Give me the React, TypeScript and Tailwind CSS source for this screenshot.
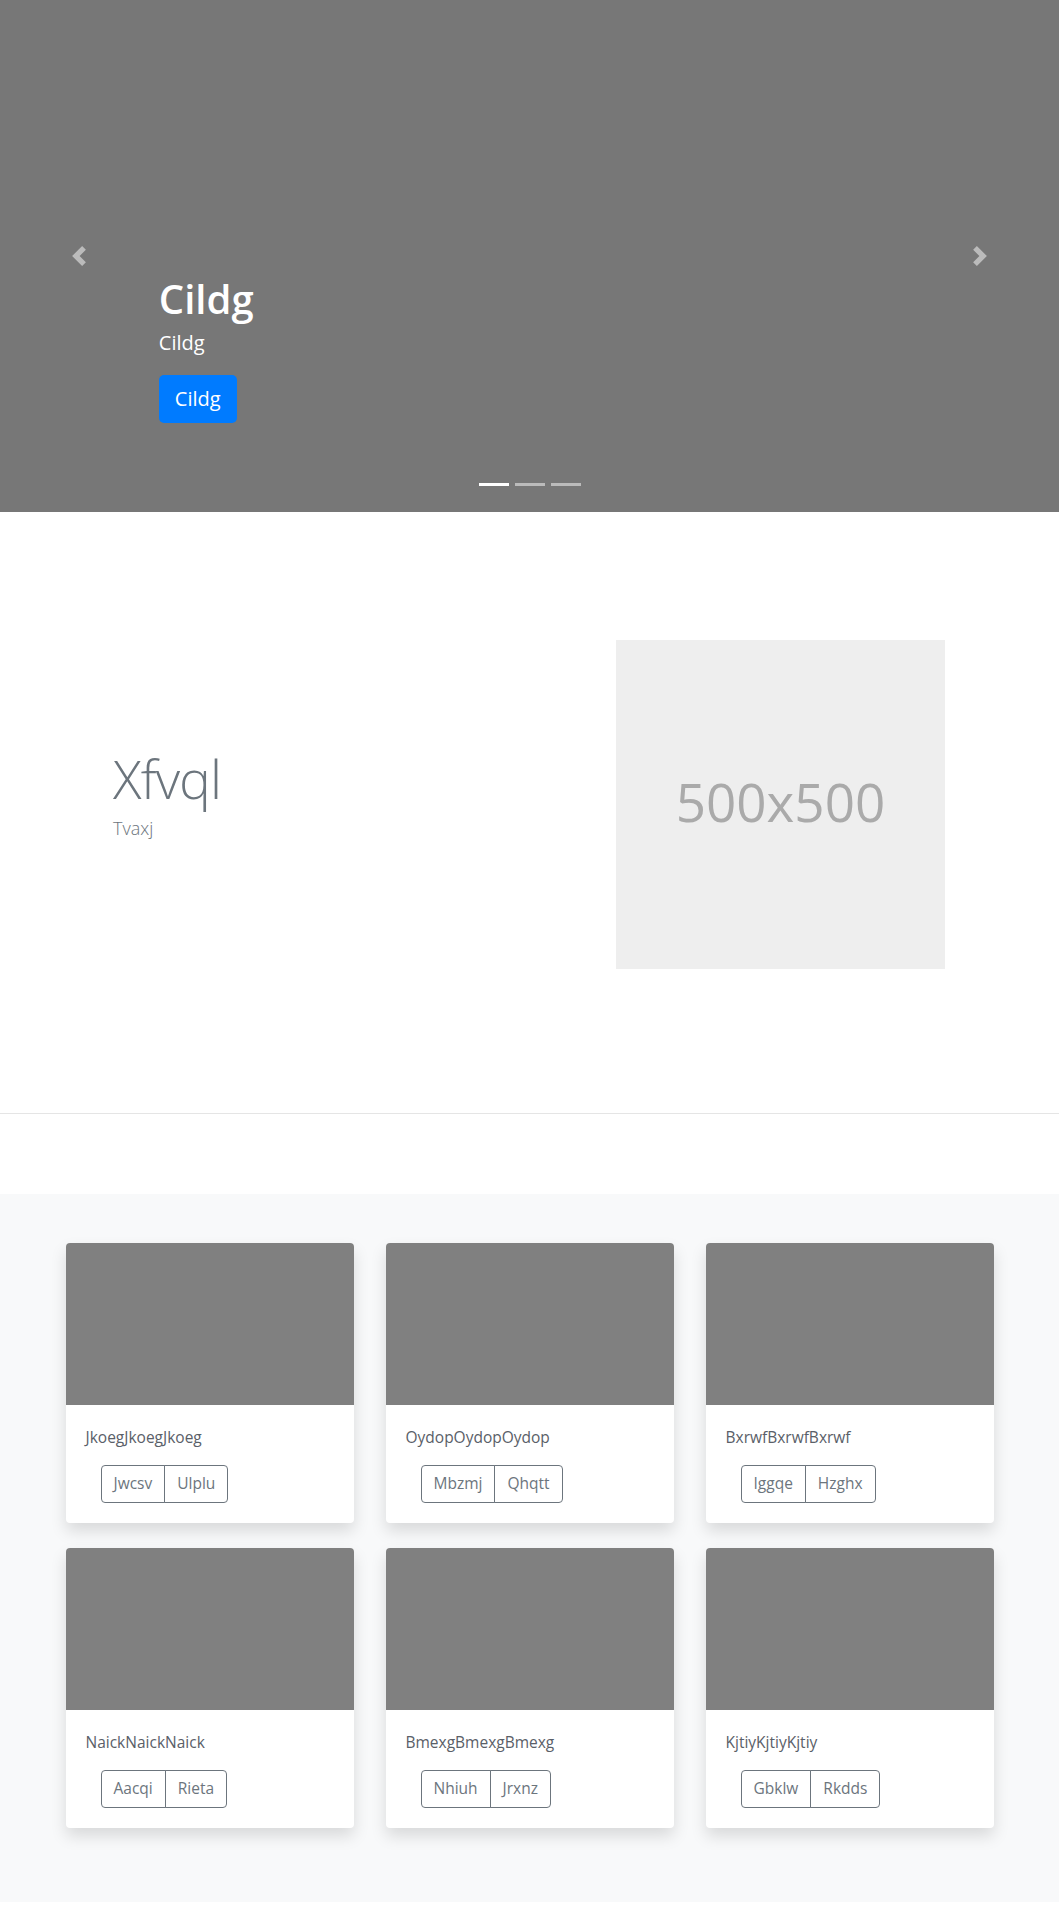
const cards = [
  { title: 'JkoegJkoegJkoeg', btns: ['Jwcsv', 'Ulplu'] },
  { title: 'OydopOydopOydop', btns: ['Mbzmj', 'Qhqtt'] },
  { title: 'BxrwfBxrwfBxrwf', btns: ['Iggqe', 'Hzghx'] },
  { title: 'NaickNaickNaick', btns: ['Aacqi', 'Rieta'] },
  { title: 'BmexgBmexgBmexg', btns: ['Nhiuh', 'Jrxnz'] },
  { title: 'KjtiyKjtiyKjtiy', btns: ['Gbklw', 'Rkdds'] },
];

function Chevron({ dir }: { dir: 'prev' | 'next' }) {
  return (
    <svg width="20" height="20" viewBox="0 0 8 8" className="fill-white opacity-50">
      {dir === 'prev' ? (
        <path d="M5.25 0l-4 4 4 4 1.5-1.5-2.5-2.5 2.5-2.5-1.5-1.5z" />
      ) : (
        <path d="M2.75 0l-1.5 1.5 2.5 2.5-2.5 2.5 1.5 1.5 4-4-4-4z" />
      )}
    </svg>
  );
}

function Carousel() {
  return (
    <section className="relative h-[512px] bg-[#777]">
      {/* controls */}
      <div className="absolute left-0 top-0 bottom-0 w-[15%] flex items-center justify-center">
        <Chevron dir="prev" />
      </div>
      <div className="absolute right-0 top-0 bottom-0 w-[15%] flex items-center justify-center">
        <Chevron dir="next" />
      </div>

      {/* caption */}
      <div className="absolute left-[15%] right-[15%] bottom-[53px] pt-5 pb-[36px] text-white">
        <h1 className="text-[40px] font-semibold leading-[1.2] mb-[5px]">Cildg</h1>
        <p className="text-[20px] leading-[1.5] mb-[17px]">Cildg</p>
        <a className="block w-fit rounded-[5px] bg-[#007bff] px-4 py-[9px] text-[20px] leading-[1.5] text-white">
          Cildg
        </a>
      </div>

      {/* indicators */}
      <ol className="absolute bottom-0 left-0 right-0 mb-4 flex justify-center">
        {[0, 1, 2].map((i) => (
          <li
            key={i}
            className={`mx-[3px] h-[23px] w-[30px] border-y-[10px] border-transparent bg-clip-padding ${
              i === 0 ? 'bg-white' : 'bg-white/50'
            }`}
          />
        ))}
      </ol>
    </section>
  );
}

function Featurette() {
  return (
    <section className="pt-[128px] pb-[144px] pl-[113px] pr-[114px] flex items-center justify-between border-b border-[#e5e5e5]">
      <div className="pb-[16px]">
        <h2 className="text-[53px] font-light leading-none tracking-[-0.8px] text-[#6c757d]">Xfvql</h2>
        <p className="mt-[10px] text-[18px] font-light leading-[1.5] text-[#6c757d]">Tvaxj</p>
      </div>
      <div className="w-[329px] h-[329px] bg-[#eee] flex items-center justify-center pb-[5px]">
        <span className="text-[53px] text-[#aaa]">500x500</span>
      </div>
    </section>
  );
}

function Card({ title, btns }: { title: string; btns: string[] }) {
  return (
    <div className="rounded bg-white shadow-[0_8px_16px_rgba(0,0,0,0.13)] overflow-hidden">
      <div className="h-[162px] bg-[#808080]" />
      <div className="p-5">
        <p className="text-[15.5px] leading-6 text-[#5a6068] mb-4">{title}</p>
        <div className="ml-[15px] inline-flex">
          {btns.map((b, i) => (
            <button
              key={b}
              className={`h-[38px] px-3 text-[15.5px] text-[#6c757d] border border-[#6c757d] ${
                i === 0 ? 'rounded-l' : 'rounded-r -ml-px'
              }`}
            >
              {b}
            </button>
          ))}
        </div>
      </div>
    </div>
  );
}

export default function App() {
  return (
    <div className="font-['Open_Sans','Noto_Sans',sans-serif] bg-white">
      <Carousel />
      <Featurette />
      <div className="h-[80px]" />
      <section className="bg-[#f8f9fa] pt-[49px] pb-[50px]">
        <div className="mx-auto w-[928px] grid grid-cols-3 gap-x-[32px] gap-y-[25px] pb-6">
          {cards.map((c) => (
            <Card key={c.title} {...c} />
          ))}
        </div>
      </section>
      <div className="h-[18px]" />
    </div>
  );
}
